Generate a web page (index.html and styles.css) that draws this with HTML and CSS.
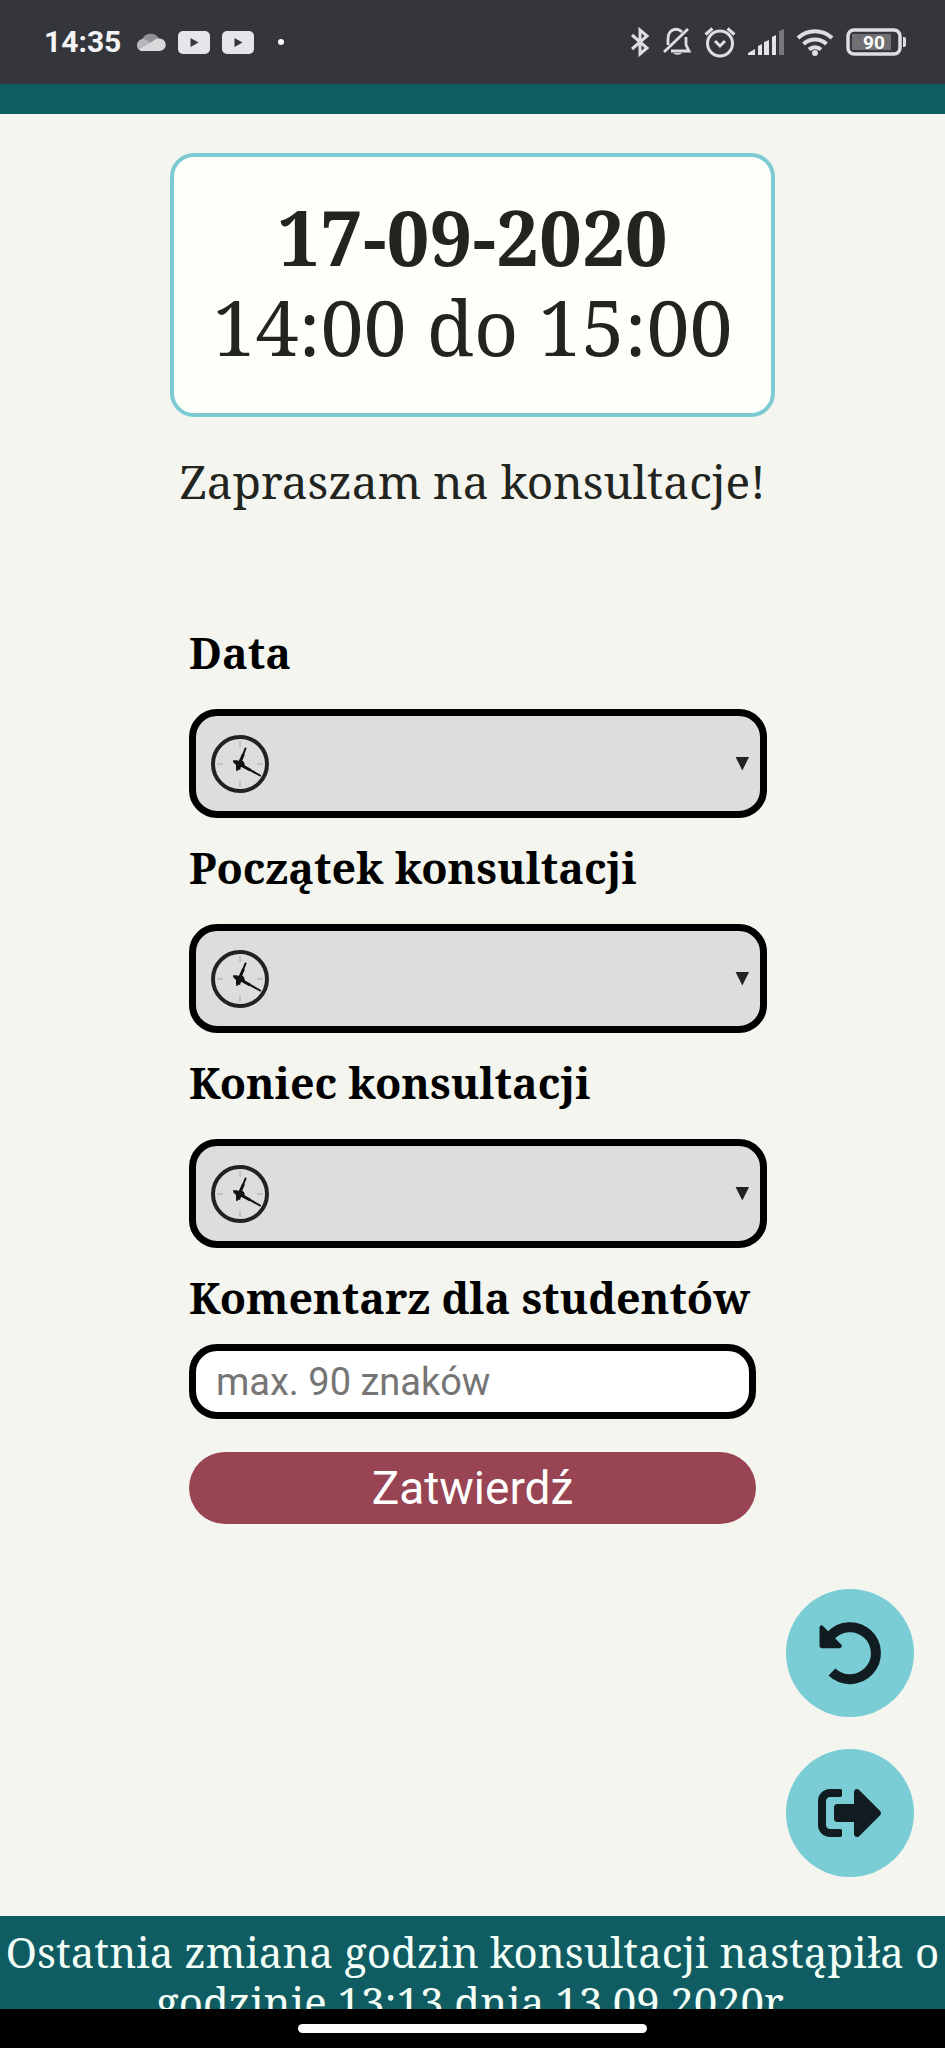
FILE: index.html
```html
<!DOCTYPE html>
<html lang="pl">
<head>
<meta charset="utf-8">
<meta name="viewport" content="width=device-width, initial-scale=1">
<title>Konsultacje</title>
<link rel="stylesheet" href="styles.css">
</head>
<body>
<svg class="defs" aria-hidden="true">
  <symbol id="clock" viewBox="0 0 60 60">
    <circle cx="30" cy="30" r="27" fill="none" stroke="#222" stroke-width="4"/>
    <path d="M30 7v6M30 47v6M7 30h6M47 30h6" stroke="#b8b8b8" stroke-width="1.5"/>
    <path d="M27 36 35.500 14.500M24 27 50 41.500" stroke="#111" stroke-width="2" stroke-linecap="round"/>
    <path d="M28.500 31.500 33.500 20M30 30.500 40 36" stroke="#111" stroke-width="3"/>
    <path d="m30 25 4 3 1 4-4 1-1 3-4-1 0-4-3-3 3-2 3 1Z" fill="#111"/>
  </symbol>
  <symbol id="youtube" viewBox="0 0 32 23">
    <rect width="32" height="23" rx="5" fill="#e6e6ea"/>
    <path d="M12.500 7v9l8-4.500Z" fill="#35363b"/>
  </symbol>
</svg>

<header class="status">
  <div class="status-group">
    <span class="time">14:35</span>
    <svg class="cloud" viewBox="0 0 30 20" width="30" height="20">
      <path d="M6 19a6 6 0 0 1 0-11.500A9.500 9.500 0 0 1 23 6.500L14 12Z" fill="#929296"/>
      <path d="M1 14a6 6 0 0 1 9-6l8 5-12 6a6 6 0 0 1-5-5Z" fill="#b9b9bd"/>
      <path d="M3 17.500 17 9a6 6 0 0 1 6-2.500 6 6 0 0 1 1 12.500H6a5 5 0 0 1-3-1.500Z" fill="#d9d9dc"/>
    </svg>
    <svg width="32" height="23"><use href="#youtube"/></svg>
    <svg width="32" height="23"><use href="#youtube"/></svg>
    <span class="dot"></span>
  </div>
  <div class="status-group">
    <svg width="20" height="32" viewBox="0 0 20 32" fill="none" stroke="#dedee2" stroke-width="3"><path d="m2 9 15 13-7 6V4l7 6L2 23"/></svg>
    <svg width="30" height="32" viewBox="0 0 30 32" fill="none" stroke="#dedee2" stroke-width="2.800"><path d="M6 19v-6c0-10 9-12 14-7M24 11v8l3 6H9M2 26 26 3"/><path d="M11 27h9a5 3 0 0 1-9 0Z" fill="#dedee2" stroke="none"/></svg>
    <svg width="32" height="32" viewBox="0 0 32 32" fill="none" stroke="#dedee2" stroke-width="3"><circle cx="16" cy="17.500" r="12.500"/><path d="m11 15 5 5 5-5M1.500 8.500l7-6M30.500 8.500l-7-6"/></svg>
    <svg width="36" height="28" viewBox="0 0 36 28" fill="#e3e3e6"><path d="M0 27v-2l7-4v6ZM10 27v-9l4-2v11ZM16 27V14l5-2v15ZM24 27V9l4-2v20Z"/><path d="M31 27V3l5-2v26Z" fill="#77777b"/></svg>
    <svg width="38" height="28" viewBox="0 0 38 28" fill="none" stroke="#dedee2" stroke-width="4"><path d="M2 10a25 25 0 0 1 34 0M7.500 16a17 17 0 0 1 23 0M13 21.500a9 9 0 0 1 12 0"/><circle cx="19" cy="25" r="3" fill="#dedee2" stroke="none"/></svg>
    <svg width="60" height="28" viewBox="0 0 60 28"><rect x="2" y="2" width="52" height="24" rx="6" fill="none" stroke="#dedee2" stroke-width="3.500"/><rect x="6" y="6" width="39" height="16" fill="#707074"/><path d="M57 9h1a2 2 0 0 1 2 2v6a2 2 0 0 1-2 2h-1Z" fill="#dedee2"/><text class="level" x="28" y="21" text-anchor="middle">90</text></svg>
  </div>
</header>

<div class="topbar"></div>

<main class="page">
  <section class="card">
    <strong>17-09-2020</strong>
    <span>14:00 do 15:00</span>
  </section>
  <p class="invite">Zapraszam na konsultacje!</p>

  <form class="form">
    <label for="date">Data</label>
    <div class="picker"><select id="date"><option></option></select><svg class="clock"><use href="#clock"/></svg><span class="arrow"></span></div>
    <label for="start">Początek konsultacji</label>
    <div class="picker"><select id="start"><option></option></select><svg class="clock"><use href="#clock"/></svg><span class="arrow"></span></div>
    <label for="end">Koniec konsultacji</label>
    <div class="picker"><select id="end"><option></option></select><svg class="clock"><use href="#clock"/></svg><span class="arrow"></span></div>
    <label for="comment">Komentarz dla studentów</label>
    <input class="comment" id="comment" type="text" maxlength="90" placeholder="max. 90 znaków">
    <button class="submit" type="submit">Zatwierdź</button>
  </form>

  <nav class="actions">
    <button type="button" aria-label="Cofnij">
      <svg width="64" height="64" viewBox="0 0 192 192"><path d="M38 44A78 78 0 1 1 42 153" fill="none" stroke="#101c20" stroke-width="30"/><path d="M11 20v55h54Z" fill="#101c20" stroke="#101c20" stroke-width="13" stroke-linejoin="round"/></svg>
    </button>
    <button type="button" aria-label="Wyloguj">
      <svg width="64" height="64" viewBox="0 0 512 512" fill="#101c20"><path d="M497 273 329 441c-15 15-41 4.500-41-17v-96H152c-13.300 0-24-10.700-24-24v-96c0-13.300 10.700-24 24-24h136V88c0-21.400 25.900-32 41-17l168 168c9.300 9.400 9.300 24.600 0 34zM192 436v-40c0-6.600-5.400-12-12-12H96c-17.700 0-32-14.300-32-32V160c0-17.700 14.300-32 32-32h84c6.600 0 12-5.400 12-12V76c0-6.600-5.400-12-12-12H96c-53 0-96 43-96 96v192c0 53 43 96 96 96h84c6.600 0 12-5.400 12-12z"/></svg>
    </button>
  </nav>
</main>

<footer class="footer">Ostatnia zmiana godzin konsultacji nastąpiła o godzinie 13:13 dnia 13.09.2020r.</footer>
<div class="gesture"><span></span></div>
</body>
</html>
```
FILE: styles.css
```css
* { box-sizing: border-box; }

body {
  margin: 0;
  min-height: 100vh;
  display: flex;
  flex-direction: column;
  background: #f4f5ef;
  color: #222420;
  font-family: "Noto Serif", "Droid Serif", "Liberation Serif", serif;
}

svg { display: block; flex: none; }
.defs { position: absolute; width: 0; height: 0; }

.status {
  height: 84px;
  padding: 0 39px 0 44px;
  display: flex;
  align-items: center;
  justify-content: space-between;
  background: #35363b;
}
.status-group { display: flex; align-items: center; gap: 12px; }
.time { color: #f4f4f8; font: 700 30px/36px Roboto, sans-serif; margin-right: 3px; }
.dot { width: 6px; height: 6px; margin-left: 12px; border-radius: 50%; background: #fff; }
.level { fill: #fff; font: 700 19px Roboto, sans-serif; }

.topbar { height: 30px; background: #0f5c63; }

.page {
  position: relative;
  flex: 1;
  display: flex;
  flex-direction: column;
  align-items: center;
  padding-top: 39px;
}

.card {
  width: 64%;
  height: 264px;
  padding-bottom: 7px;
  display: flex;
  flex-direction: column;
  align-items: center;
  justify-content: center;
  border: 4px solid #7ccbd3;
  border-radius: 24px;
  background: #fdfff9;
  font-size: 77px;
  line-height: 90px;
  white-space: nowrap;
}
.card strong { font-size: 76px; font-weight: 700; }

.invite { margin: 32px 0 0; font-size: 46px; line-height: 64px; }

.form {
  width: 60%;
  margin: 110px 0 0;
  display: flex;
  flex-direction: column;
  color: #000;
}
.form label { font-size: 43px; font-weight: 700; line-height: 60px; white-space: nowrap; }

.picker {
  width: 102%;
  height: 109px;
  margin: 26px 0 20px;
  display: grid;
  align-items: center;
}
.picker > * { grid-area: 1 / 1; }
.picker select {
  width: 100%;
  height: 100%;
  appearance: none;
  border: 7px solid #000;
  border-radius: 28px;
  background: #ddd;
  color: #222;
  font: 38px Roboto, sans-serif;
  padding: 0 48px 0 80px;
}
.clock { width: 60px; height: 60px; margin-left: 21px; pointer-events: none; }
.arrow {
  width: 14px;
  height: 14px;
  margin-right: 18px;
  justify-self: end;
  background: #222;
  clip-path: polygon(0 0, 100% 0, 50% 100%);
  pointer-events: none;
}

.comment {
  width: 100%;
  height: 75px;
  margin-top: 16px;
  padding: 0 20px;
  border: 7px solid #000;
  border-radius: 28px;
  background: #fff;
  color: #222;
  font: 38px Roboto, sans-serif;
}
.comment::placeholder { color: #757575; opacity: 1; }

.submit {
  width: 100%;
  height: 72px;
  margin-top: 33px;
  padding: 0;
  border: 0;
  border-radius: 36px;
  background: #984452;
  color: #fff;
  font: 46px Roboto, sans-serif;
}

.actions {
  position: absolute;
  right: 31px;
  bottom: 39px;
  display: grid;
  gap: 32px;
}
.actions button {
  width: 128px;
  height: 128px;
  padding: 0;
  display: grid;
  place-items: center;
  border: 0;
  border-radius: 50%;
  background: #7acdd5;
}

.footer {
  height: 93px;
  padding-top: 11px;
  overflow: hidden;
  background: #0f5c63;
  color: #f4fff8;
  font-size: 42px;
  line-height: 50px;
  text-align: center;
}

.gesture {
  height: 39px;
  display: flex;
  justify-content: center;
  align-items: center;
  background: #000;
}
.gesture span { width: 37%; height: 9px; border-radius: 5px; background: #fff; }
```
